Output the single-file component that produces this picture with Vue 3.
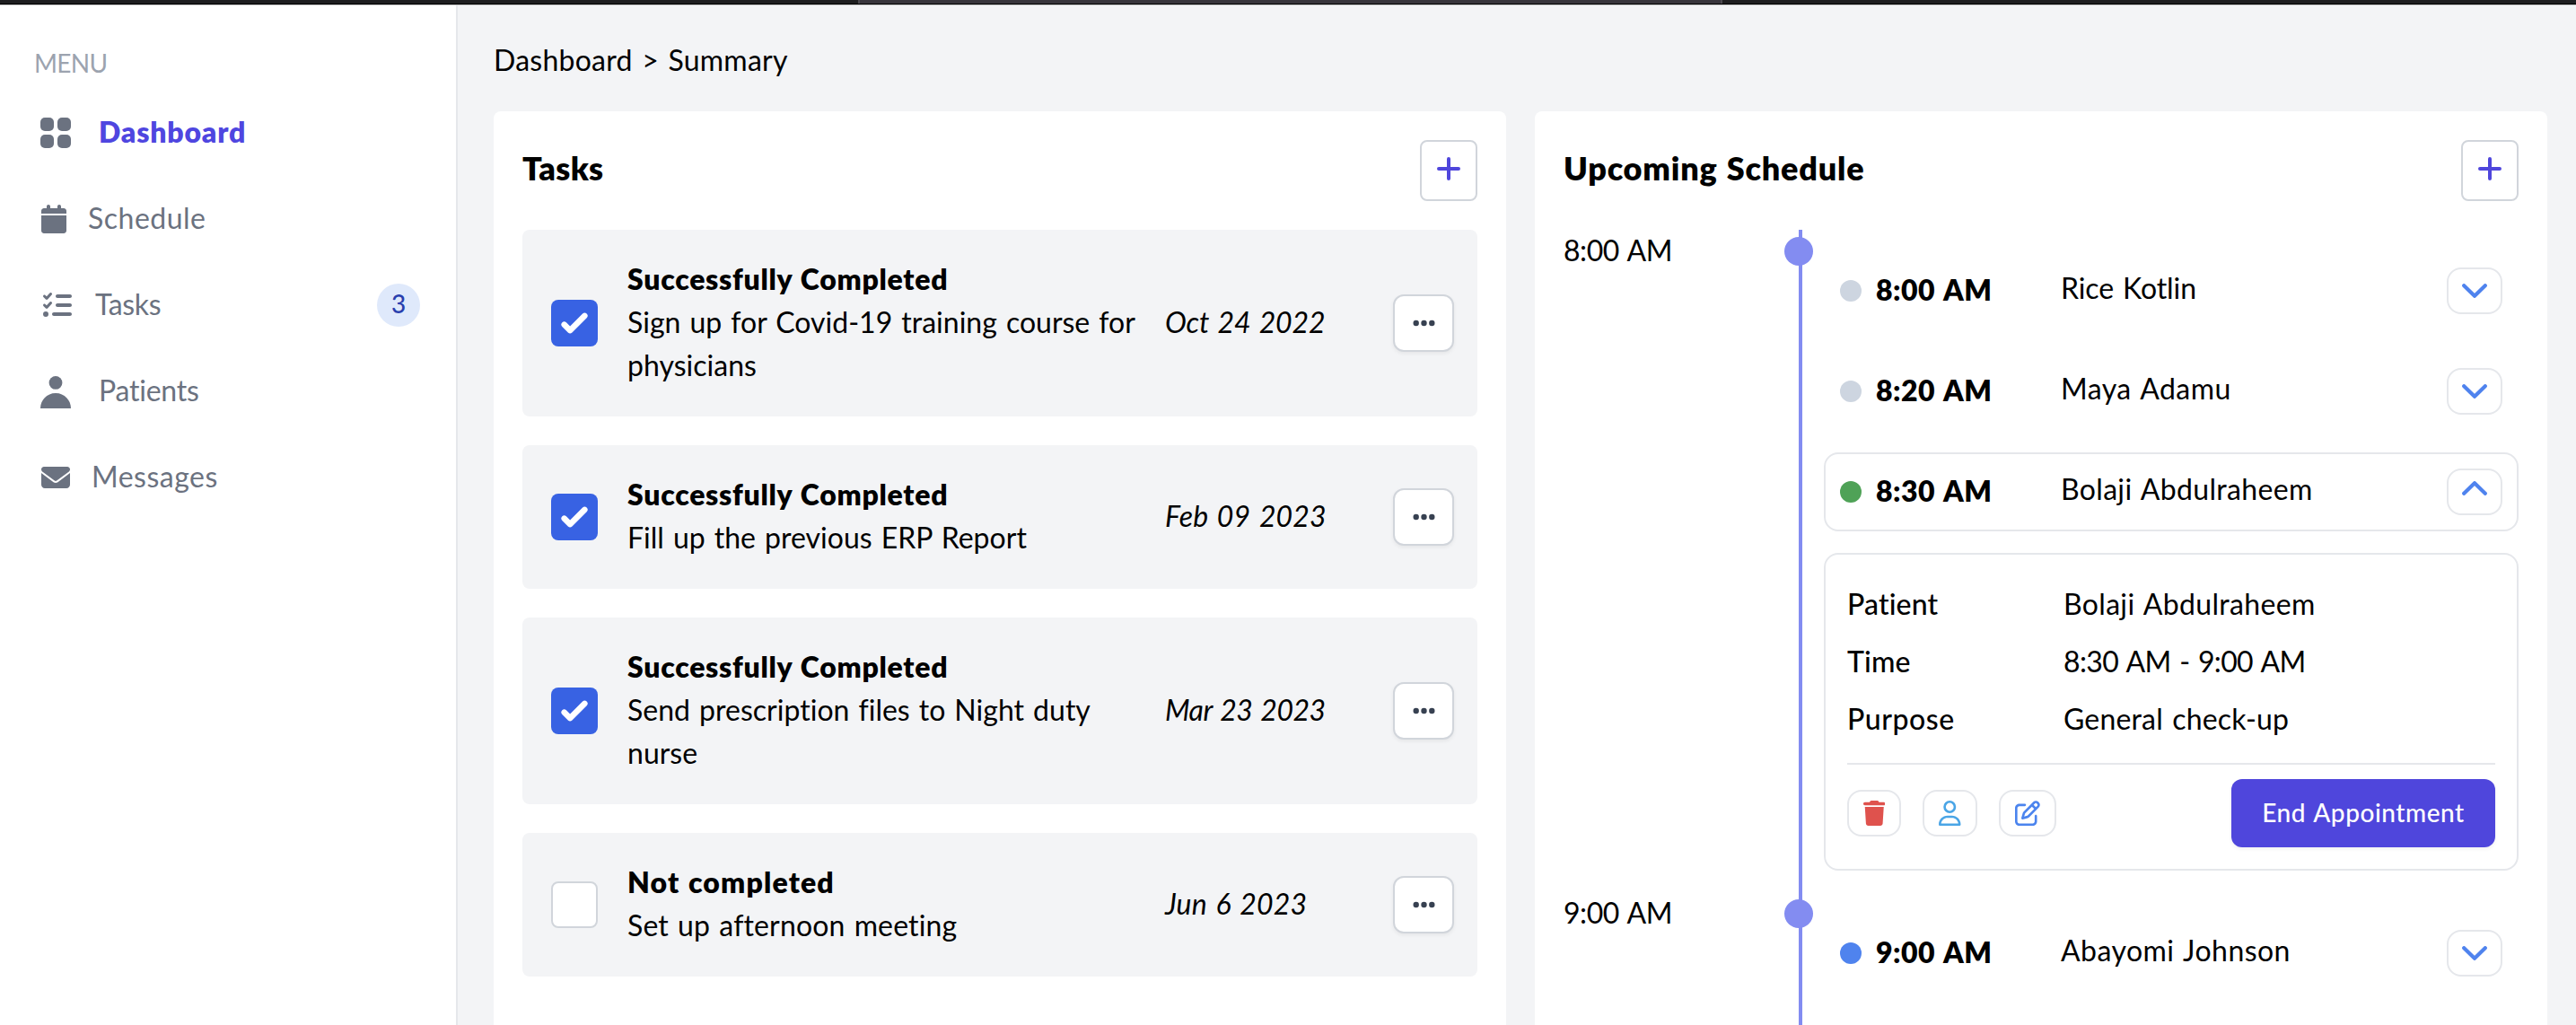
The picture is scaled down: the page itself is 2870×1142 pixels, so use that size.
<script setup>
const menu = [
  { key: 'dashboard', label: 'Dashboard', active: true },
  { key: 'schedule', label: 'Schedule' },
  { key: 'tasks', label: 'Tasks', badge: 3 },
  { key: 'patients', label: 'Patients' },
  { key: 'messages', label: 'Messages' }
]

const tasks = [
  { done: true, title: 'Successfully Completed', text: 'Sign up for Covid-19 training course for\nphysicians', date: 'Oct 24 2022', key: 'oct' },
  { done: true, title: 'Successfully Completed', text: 'Fill up the previous ERP Report', date: 'Feb 09 2023', key: 'feb' },
  { done: true, title: 'Successfully Completed', text: 'Send prescription files to Night duty\nnurse', date: 'Mar 23 2023', key: 'mar' },
  { done: false, title: 'Not completed', text: 'Set up afternoon meeting', date: 'Jun 6 2023', key: 'jun' }
]

const hours = [
  {
    label: '8:00 AM',
    slots: [
      { time: '8:00 AM', name: 'Rice Kotlin', status: 'past', key: 'rice' },
      { time: '8:20 AM', name: 'Maya Adamu', status: 'past', key: 'maya' },
      {
        time: '8:30 AM', name: 'Bolaji Abdulraheem', status: 'current', key: 'bolaji', open: true,
        details: [
          { term: 'Patient', value: 'Bolaji Abdulraheem' },
          { term: 'Time', value: '8:30 AM - 9:00 AM' },
          { term: 'Purpose', value: 'General check-up' }
        ]
      }
    ]
  },
  { label: '9:00 AM', slots: [{ time: '9:00 AM', name: 'Abayomi Johnson', status: 'next', key: 'abayomi' }] }
]
</script>

<template>
  <div class="page">
    <div class="chrome"><div class="chrome-tab"></div></div>
    <div class="shell">
      <aside class="sidebar">
        <div class="menu-title">MENU</div>
        <nav class="menu">
          <a v-for="m in menu" :key="m.key" :class="['menu-item', m.key, { active: m.active }]">
            <svg v-if="m.key === 'dashboard'" width="34" height="34" viewBox="0 0 34 34">
              <rect width="15" height="15" rx="5" /><rect x="19" width="15" height="15" rx="5" />
              <rect y="19" width="15" height="15" rx="5" /><rect x="19" y="19" width="15" height="15" rx="5" />
            </svg>
            <svg v-else-if="m.key === 'schedule'" width="28" height="32" viewBox="0 0 448 512">
              <path d="M96 32V64H48C21.5 64 0 85.5 0 112v48H448V112c0-26.5-21.5-48-48-48H352V32c0-17.7-14.3-32-32-32s-32 14.3-32 32V64H160V32c0-17.7-14.3-32-32-32S96 14.3 96 32zM448 192H0V464c0 26.5 21.5 48 48 48H400c26.5 0 48-21.5 48-48V192z" />
            </svg>
            <svg v-else-if="m.key === 'tasks'" width="32" height="32" viewBox="0 0 512 512">
              <path d="M152.1 38.2c9.9 8.9 10.7 24 1.8 33.9l-72 80c-4.4 4.9-10.6 7.8-17.2 7.9s-12.9-2.4-17.6-7L7 113C-2.3 103.6-2.3 88.4 7 79s24.6-9.4 33.9 0l22.1 22.1 55.1-61.2c8.9-9.9 24-10.7 33.9-1.8zm0 160c9.9 8.9 10.7 24 1.8 33.9l-72 80c-4.4 4.9-10.6 7.8-17.2 7.9s-12.9-2.4-17.6-7L7 273c-9.4-9.4-9.4-24.6 0-33.9s24.6-9.4 33.9 0l22.1 22.1 55.1-61.2c8.9-9.9 24-10.7 33.9-1.8zM224 96c0-17.7 14.3-32 32-32H480c17.7 0 32 14.3 32 32s-14.3 32-32 32H256c-17.7 0-32-14.3-32-32zm0 160c0-17.7 14.3-32 32-32H480c17.7 0 32 14.3 32 32s-14.3 32-32 32H256c-17.7 0-32-14.3-32-32zM160 416c0-17.7 14.3-32 32-32H480c17.7 0 32 14.3 32 32s-14.3 32-32 32H192c-17.7 0-32-14.3-32-32zM48 368a48 48 0 1 1 0 96 48 48 0 1 1 0-96z" />
            </svg>
            <svg v-else-if="m.key === 'patients'" width="34" height="36" viewBox="0 0 34 36">
              <circle cx="17" cy="7.4" r="7.4" /><path d="M0 36C0 27 7 19 17 19s17 8 17 17z" />
            </svg>
            <svg v-else width="32" height="32" viewBox="0 0 512 512">
              <path d="M48 64C21.5 64 0 85.5 0 112c0 15.1 7.1 29.3 19.2 38.4L236.8 313.6c11.4 8.5 27 8.5 38.4 0L492.8 150.4c12.1-9.1 19.2-23.3 19.2-38.4c0-26.5-21.5-48-48-48H48zM0 176V384c0 35.3 28.7 64 64 64H448c35.3 0 64-28.7 64-64V176L294.4 339.2c-22.8 17.1-54 17.1-76.8 0L0 176z" />
            </svg>
            <span class="menu-label">{{ m.label }}</span>
            <span v-if="m.badge" class="badge">{{ m.badge }}</span>
          </a>
        </nav>
      </aside>

      <main class="content">
        <div class="crumbs">Dashboard &gt; Summary</div>
        <div class="cards">
          <section class="card">
            <header class="card-head">
              <h2 class="tasks-title">Tasks</h2>
              <button class="add"><svg width="26" height="26" viewBox="0 0 26 26"><path d="M13 2v22M2 13h22" /></svg></button>
            </header>
            <ul class="task-list">
              <li v-for="t in tasks" :key="t.key" :class="['task', t.key]">
                <span :class="['check', { on: t.done }]">
                  <svg v-if="t.done" width="52" height="52" viewBox="0 0 16 16"><path d="M12.207 4.793a1 1 0 010 1.414l-5 5a1 1 0 01-1.414 0l-2-2a1 1 0 011.414-1.414L6.5 9.086l4.293-4.293a1 1 0 011.414 0z" /></svg>
                </span>
                <div class="task-body">
                  <div class="task-title">{{ t.title }}</div>
                  <div class="task-text">{{ t.text }}</div>
                </div>
                <div class="task-date">{{ t.date }}</div>
                <button class="more"><svg width="25" height="8" viewBox="0 0 25 8"><circle cx="3.7" cy="4" r="3.2" /><circle cx="12.5" cy="4" r="3.2" /><circle cx="21.3" cy="4" r="3.2" /></svg></button>
              </li>
            </ul>
          </section>

          <section class="card">
            <header class="card-head">
              <h2 class="schedule-title">Upcoming Schedule</h2>
              <button class="add"><svg width="26" height="26" viewBox="0 0 26 26"><path d="M13 2v22M2 13h22" /></svg></button>
            </header>
            <div class="timeline">
              <div v-for="h in hours" :key="h.label" class="hour">
                <div class="hour-label">{{ h.label }}</div>
                <div class="hour-slots">
                  <span class="node"></span>
                  <template v-for="s in h.slots" :key="s.key">
                    <div :class="['slot', s.key, { open: s.open }]">
                      <span :class="['dot', s.status]"></span>
                      <span class="slot-time">{{ s.time }}</span>
                      <span class="slot-name">{{ s.name }}</span>
                      <button class="toggle">
                        <svg width="28" height="16" viewBox="0 0 28 16"><path :d="s.open ? 'M2.2 13.8 14 2.2l11.8 11.6' : 'M2.2 2.2 14 13.8 25.8 2.2'" /></svg>
                      </button>
                    </div>
                    <div v-if="s.details" class="detail">
                      <dl>
                        <div v-for="d in s.details" :key="d.term" :class="['pair', d.term.toLowerCase()]">
                          <dt>{{ d.term }}</dt><dd>{{ d.value }}</dd>
                        </div>
                      </dl>
                      <div class="actions">
                        <button class="act trash"><svg width="24.5" height="28" viewBox="0 0 448 512"><path d="M135.2 17.7L128 32H32C14.3 32 0 46.3 0 64S14.3 96 32 96H416c17.7 0 32-14.3 32-32s-14.3-32-32-32H320l-7.2-14.3C307.4 6.8 296.3 0 284.2 0H163.8c-12.1 0-23.2 6.8-28.6 17.7zM416 128H32L53.2 467c1.6 25.3 22.6 45 47.9 45H346.9c25.3 0 46.3-19.7 47.9-45L416 128z" /></svg></button>
                        <button class="act user"><svg width="24.5" height="28" viewBox="0 0 448 512"><path d="M304 128a80 80 0 1 0 -160 0 80 80 0 1 0 160 0zM96 128a128 128 0 1 1 256 0A128 128 0 1 1 96 128zM49.3 464H398.7c-8.9-63.3-63.3-112-129-112H178.3c-65.7 0-120.1 48.7-129 112zM0 482.3C0 383.8 79.8 304 178.3 304h91.4C368.2 304 448 383.8 448 482.3c0 16.4-13.3 29.7-29.7 29.7H29.7C13.3 512 0 498.7 0 482.3z" /></svg></button>
                        <button class="act edit"><svg width="28" height="28" viewBox="0 0 512 512"><path d="M441 58.9L453.1 71c9.4 9.4 9.4 24.6 0 33.9L424 134.1 377.9 88 407 58.9c9.4-9.4 24.6-9.4 33.9 0zM209.8 256.2L344 121.9 390.1 168 255.8 302.2c-2.9 2.9-6.5 5-10.4 6.1l-58.5 16.7 16.7-58.5c1.1-3.9 3.2-7.5 6.1-10.4zM373.1 25L175.8 222.2c-8.7 8.7-15 19.4-18.3 31.1l-28.6 100c-2.4 8.4-.1 17.4 6.1 23.6s15.2 8.5 23.6 6.1l100-28.6c11.8-3.4 22.5-9.7 31.1-18.3L487 138.9c28.1-28.1 28.1-73.7 0-101.8L474.9 25C446.8-3.1 401.2-3.1 373.1 25zM88 64C39.4 64 0 103.4 0 152V424c0 48.6 39.4 88 88 88H360c48.6 0 88-39.4 88-88V312c0-13.3-10.7-24-24-24s-24 10.7-24 24V424c0 22.1-17.9 40-40 40H88c-22.1 0-40-17.9-40-40V152c0-22.1 17.9-40 40-40H200c13.3 0 24-10.7 24-24s-10.7-24-24-24H88z" /></svg></button>
                        <button class="end"><span>End Appointment</span></button>
                      </div>
                    </div>
                  </template>
                </div>
              </div>
            </div>
          </section>
        </div>
      </main>
    </div>
  </div>
</template>

<style>
html, body { margin: 0; overflow: hidden; background: #f3f4f6; }
</style>

<style scoped>
.page {
  height: 1142px;
  overflow: hidden;
  display: flex;
  flex-direction: column;
  font-family: Lato, "Open Sans", sans-serif;
  font-size: 32px;
  line-height: 48px;
  letter-spacing: 0.4px;
  font-variant-ligatures: none;
  color: #000;
}
.page * { box-sizing: border-box; }
button { margin: 0; padding: 0; font: inherit; letter-spacing: inherit; background: #fff; }
svg { display: block; flex: none; }
ul, dl, dd, h2 { margin: 0; padding: 0; list-style: none; }

.chrome { flex: none; height: 5px; background: #1e1e20; border-bottom: 1px solid #000; padding-left: 956px; }
.chrome-tab { width: 963px; height: 4px; background: #38353c; border-left: 2px solid #4c494f; border-right: 2px solid #4c494f; }
.shell { flex: 1; min-height: 0; display: flex; border-top: 1px solid #c3c3c4; }

.sidebar { width: 510px; flex: none; background: #fff; border-right: 2px solid #e5e7eb; padding: 40px 40px 0 38px; }
.menu-title { font-size: 28px; line-height: 48px; height: 48px; letter-spacing: -0.68px; color: #9ca3af; }
.menu { display: flex; flex-direction: column; gap: 48px; margin-top: 30px; }
.menu-item { display: flex; align-items: center; height: 48px; padding-left: 8px; color: #6b7280; fill: #6b7280; }
.menu-label { margin: -1px 0 1px 24px; letter-spacing: 0.5px; }
.active .menu-label { color: #4f46e0; font-weight: 800; letter-spacing: 0.8px; }
.dashboard, .patients { padding-left: 7px; }
.dashboard .menu-label { margin-left: 31px; }
.patients svg { margin-top: 2px; }
.patients .menu-label { margin-left: 31px; letter-spacing: -0.23px; }
.tasks { padding-left: 10px; }
.tasks .menu-label { margin-left: 26px; letter-spacing: -0.4px; }
.badge {
  margin-left: auto; width: 48px; height: 48px; border-radius: 24px; background: #dfe9fb; color: #2a3fae;
  font-size: 28px; font-weight: 500; line-height: 44px; text-align: center; letter-spacing: 0;
}

.content { flex: 1; display: flex; flex-direction: column; padding: 37px 32px 0 40px; }
.crumbs { margin-bottom: 33px; letter-spacing: 0.25px; word-spacing: 2px; }
.cards { flex: 1; display: flex; gap: 32px; }
.card { flex: 1; display: flex; flex-direction: column; background: #fff; border-radius: 8px 8px 0 0; padding: 32px 32px 0; }
.card-head { display: flex; justify-content: space-between; align-items: center; height: 68px; margin-bottom: 32px; }
h2 { font-size: 36px; line-height: 56px; font-weight: 800; margin: -3px 0 3px; letter-spacing: 0.3px; }
.schedule-title { letter-spacing: 0.8px; word-spacing: 1px; }
.add {
  width: 64px; height: 68px; display: flex; justify-content: center; padding-top: 17px;
  border: 2px solid #d1d5db; border-radius: 8px;
}
.add svg { fill: none; stroke: #4f46dc; stroke-width: 4; stroke-linecap: round; }

.task-list { display: flex; flex-direction: column; gap: 32px; }
.task { display: flex; align-items: center; padding: 32px 26px 32px 32px; background: #f3f4f6; border-radius: 8px; }
.check { flex: none; width: 52px; height: 52px; border-radius: 8px; background: #fff; border: 2px solid #d1d5db; }
.check.on { background: #3862e3; border: 0; fill: #fff; }
.task-body { width: 600px; margin: -1px 0 1px; padding-left: 33px; }
.task-title { font-weight: 800; letter-spacing: 0.72px; word-spacing: 1px; }
.task-text { white-space: pre; letter-spacing: 0.02px; word-spacing: 1.8px; }
.jun .task-title { letter-spacing: 1.15px; }
.jun .task-text { letter-spacing: 0.15px; }
.task-date { flex: 1; margin: -1px 0 1px 32px; font-style: italic; letter-spacing: 0.15px; word-spacing: 2px; }
.oct .task-date { letter-spacing: -0.15px; }
.mar .task-date { letter-spacing: -0.5px; }
.more {
  width: 68px; height: 64px; display: flex; align-items: center; justify-content: center;
  border: 2px solid #d1d5db; border-radius: 12px; box-shadow: 0 2px 4px rgba(0, 0, 0, 0.06); fill: #374151;
}
.more svg { margin-top: -1px; }

.timeline { flex: 1; min-height: 0; }
.hour { display: flex; }
.hour:last-child { min-height: 300px; }
.hour-label { width: 262px; margin-top: -1px; letter-spacing: -0.45px; word-spacing: 2px; }
.hour-slots { position: relative; flex: 1; border-left: 4px solid #838cf1; padding: 24px 0 0 24px; display: flex; flex-direction: column; gap: 24px; }
.node { position: absolute; left: -20px; top: 8px; width: 32px; height: 32px; border-radius: 50%; background: #838cf1; }
.slot { display: flex; align-items: center; height: 88px; padding: 0 16px; border: 2px solid transparent; border-radius: 16px; }
.slot.open { border-color: #e5e7eb; }
.dot { width: 24px; height: 24px; border-radius: 50%; margin-right: 16px; }
.past { background: #cdd5e0; }
.current { background: #4fa257; }
.next { background: #4f83ee; }
.slot-time { width: 206px; margin: -1px 0 1px; font-weight: 800; letter-spacing: 0.5px; word-spacing: 2px; }
.slot-name { flex: 1; margin: -3px 0 3px; letter-spacing: 0.33px; word-spacing: 2px; }
.rice .slot-name { letter-spacing: -0.1px; }
.maya .slot-name, .abayomi .slot-name { letter-spacing: 0.45px; }
.toggle {
  width: 62px; height: 52px; display: flex; justify-content: center; padding-top: 16px;
  border: 2px solid #e5e7eb; border-radius: 16px;
}
.open .toggle { padding-top: 12px; }
.toggle svg { fill: none; stroke: #4f83ee; stroke-width: 4.2; stroke-linecap: round; stroke-linejoin: round; }

.detail { height: 354px; margin-bottom: 24px; border: 2px solid #e5e7eb; border-radius: 16px; padding: 32px 24px 24px; }
dl { display: flex; flex-direction: column; gap: 16px; padding-bottom: 24px; border-bottom: 2px solid #e5e7eb; }
.pair { display: flex; height: 48px; margin-top: -1px; margin-bottom: 1px; }
dt { width: 241px; font-weight: 500; letter-spacing: 0.14px; }
.purpose dt { letter-spacing: 0.55px; }
dd { letter-spacing: 0.33px; word-spacing: 2px; }
.time dd { letter-spacing: -0.65px; }
.purpose dd { letter-spacing: 0.17px; }
.actions { display: flex; align-items: center; gap: 24px; margin-top: 16px; }
.act { height: 52px; display: flex; align-items: center; justify-content: center; border: 2px solid #e5e7eb; border-radius: 16px; }
.trash { width: 60px; fill: #df524d; }
.user { width: 61px; fill: #4aa5e6; }
.edit { width: 64px; fill: #4b84ee; }
.end {
  width: 294px; height: 76px; margin-left: auto; border: 0; border-radius: 12px; background: #4f46dc; color: #fff;
  font-size: 28px; font-weight: 500; letter-spacing: 0.55px; word-spacing: 1.5px; box-shadow: 0 2px 4px rgba(0, 0, 0, 0.06);
}
.end span { display: block; margin-top: -3px; }
</style>
